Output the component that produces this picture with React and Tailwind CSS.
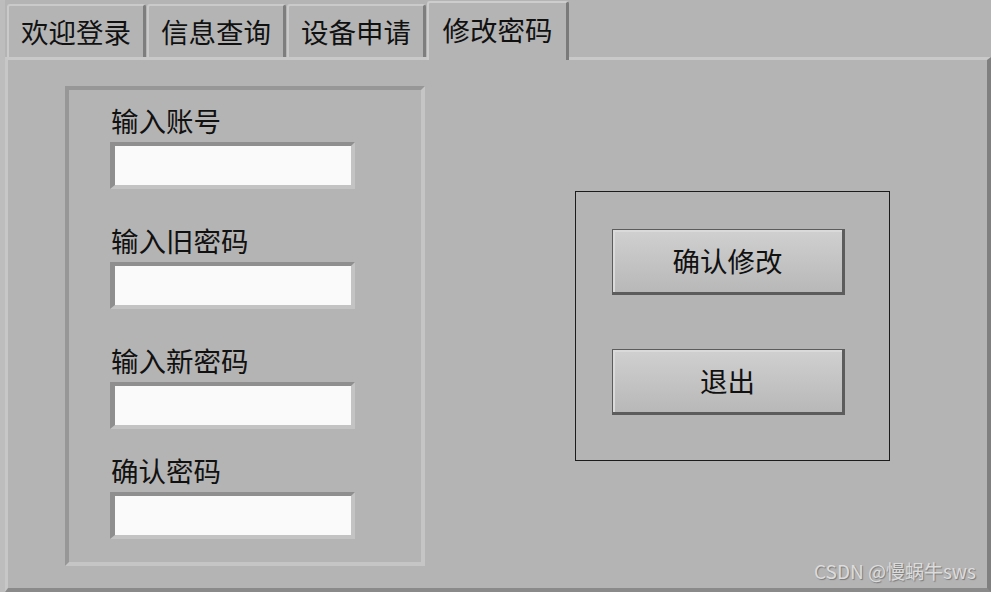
import React from 'react';

const font = { fontFamily: '"Noto Sans CJK SC", "Noto Sans", sans-serif' };

const tabs = ['欢迎登录', '信息查询', '设备申请', '修改密码'];

const fields = [
  { label: '输入账号', gap: 'mt-0' },
  { label: '输入旧密码', gap: 'mt-[35px]' },
  { label: '输入新密码', gap: 'mt-[35px]' },
  { label: '确认密码', gap: 'mt-[25px]' },
];

function Tab({ label, active }) {
  if (active) {
    return (
      <div className="relative z-10 -mb-[3px] flex h-[59px] w-[142px] items-center justify-center rounded-tl-[3px] rounded-tr-[3px] border-l-2 border-t-2 border-r-[3px] border-l-[#cdcdcd] border-t-[#cdcdcd] border-r-[#7a7a7a] bg-[#b4b4b4] pb-[4px] text-[27.5px] text-[#111]">
        {label}
      </div>
    );
  }
  return (
    <div className="flex h-[53px] w-[139px] items-center justify-center rounded-tl-[3px] rounded-tr-[3px] border-l-2 border-t-2 border-r-[3px] border-l-[#cacaca] border-t-[#cacaca] border-r-[#7e7e7e] bg-[#b4b4b4] text-[27.5px] text-[#111]">
      {label}
    </div>
  );
}

function Field({ label, gap }) {
  return (
    <div className={`flex flex-col ${gap}`}>
      <div className="ml-[1px] h-[32px] text-[27.5px] leading-[32px] text-[#111]">{label}</div>
      <div className="mt-[6px] h-[47px] w-[245px] border-[4px] border-l-[5px] border-t-[#8f8f8f] border-l-[#8f8f8f] border-b-[#c3c3c3] border-r-[#c3c3c3] bg-[#fafafa]" />
    </div>
  );
}

function Button({ children, className = '' }) {
  return (
    <button className={`flex h-[66px] w-[233px] items-center justify-center border border-b-[3px] border-r-[3px] border-[#5c5c5c] bg-gradient-to-b from-[#d0d0d0] to-[#b8b8b8] text-[27.5px] text-[#111] shadow-[inset_2px_2px_0_#dadada] ${className}`}>
      {children}
    </button>
  );
}

export default function App() {
  return (
    <div
      className="relative flex h-[592px] w-[991px] flex-col overflow-hidden border-l-[5px] border-l-[#bdbdbd] bg-[#b4b4b4]"
      style={font}
    >
      {/* Tabs */}
      <div className="flex h-[57px] items-end gap-[1px] pl-[2px]">
        {tabs.map((t, i) => (
          <Tab key={t} label={t} active={i === 3} />
        ))}
      </div>

      {/* Panel */}
      <div className="flex flex-1 items-start border-t-[3px] border-l-[3px] border-r-[4px] border-b-[4px] border-t-[#c9c9c9] border-l-[#c7c7c7] border-r-[#7f7f7f] border-b-[#8a8a8a]">
        {/* Account group */}
        <div className="ml-[57px] mt-[26px] flex h-[480px] w-[360px] flex-col border-[4px] border-t-[#979797] border-l-[#979797] border-b-[#c5c5c5] border-r-[#c5c5c5] pl-[41px] pt-[14px]">
          {fields.map((f) => (
            <Field key={f.label} label={f.label} gap={f.gap} />
          ))}
        </div>

        {/* Action box */}
        <div className="ml-[150px] mt-[131px] flex h-[270px] w-[315px] flex-col border border-[#1c1c1c] pl-[36px] pt-[37px]">
          <Button>确认修改</Button>
          <Button className="mt-[54px]">退出</Button>
        </div>
      </div>

      <div className="absolute bottom-[7px] right-[15px] text-[19px] text-[#dcdcdc] [text-shadow:1px_1px_1px_#7a7a7a]">
        CSDN @慢蜗牛sws
      </div>
    </div>
  );
}
